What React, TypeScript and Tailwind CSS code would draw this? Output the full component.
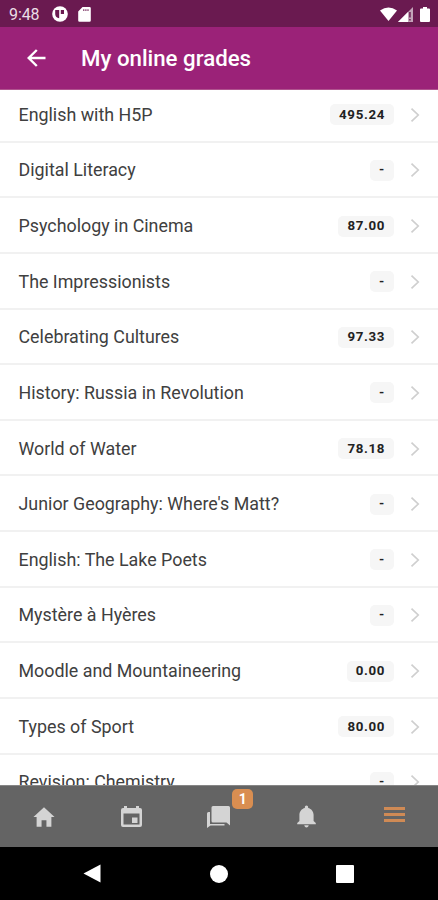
import { ReactNode } from 'react';
import { IoMdHome, IoMdNotifications } from 'react-icons/io';

interface Course {
  name: string;
  grade: string;
}

const courses: Course[] = [
  { name: 'English with H5P', grade: '495.24' },
  { name: 'Digital Literacy', grade: '-' },
  { name: 'Psychology in Cinema', grade: '87.00' },
  { name: 'The Impressionists', grade: '-' },
  { name: 'Celebrating Cultures', grade: '97.33' },
  { name: 'History: Russia in Revolution', grade: '-' },
  { name: 'World of Water', grade: '78.18' },
  { name: "Junior Geography: Where's Matt?", grade: '-' },
  { name: 'English: The Lake Poets', grade: '-' },
  { name: 'Mystère à Hyères', grade: '-' },
  { name: 'Moodle and Mountaineering', grade: '0.00' },
  { name: 'Types of Sport', grade: '80.00' },
  { name: 'Revision: Chemistry', grade: '-' },
];

function StatusBar() {
  return (
    <div className="h-[27px] shrink-0 bg-[#6a1a50] flex items-center pl-[9px] pr-2 pt-px text-white">
      <span className="w-[43px] text-[16px] leading-none pt-px tracking-[-0.1px] text-[#eadfe6]">9:48</span>
      <svg className="w-4 h-4" viewBox="0 0 16 16">
        <circle cx="8" cy="8" r="7.8" fill="#fff" />
        <path d="M3.2 4H7.2v8.200A4.600 4.600 0 0 1 3.200 8z" fill="#6a1a50" />
        <path d="M8.800 4h3.200v4H8.800z" fill="#6a1a50" />
      </svg>
      <svg className="w-[13px] h-[15px] ml-[10px]" viewBox="0 0 13 15">
        <path d="M4.500 0h7A1.300 1.300 0 0 1 12.800 1.300v12.200a1.300 1.300 0 0 1-1.300 1.300h-10A1.300 1.300 0 0 1 .2 13.500V4.500z" fill="#fff" />
        <path d="M5.300 2.200h1v1.800h-1zM7.400 2.200h1v1.800h-1zM9.500 2.200h1v1.800h-1z" fill="#6a1a50" />
      </svg>
      <svg className="w-[17px] h-[15px] ml-auto" viewBox="0 0 17 15">
        <path d="M0 3.500Q8.500-2.600 17 3.500L8.500 14z" fill="#fff" />
      </svg>
      <svg className="w-[15px] h-[15px] ml-px" viewBox="0 0 15 15">
        <path d="M15 0v15H0z" fill="#fff" fillOpacity=".6" />
        <path d="M10 5v10H0z" fill="#fff" />
        <path d="M11.200 5h1.500v5.500h-1.500zM11.200 12h1.500v1.600h-1.500z" fill="#6a1a50" />
      </svg>
      <svg className="w-[10px] h-[15px] ml-[7px]" viewBox="0 0 10 16" preserveAspectRatio="none">
        <path d="M3 0h4v1.600h2a1 1 0 0 1 1 1V15a1 1 0 0 1-1 1H1a1 1 0 0 1-1-1V2.600a1 1 0 0 1 1-1h2z" fill="#fff" />
      </svg>
    </div>
  );
}

function Header() {
  return (
    <header className="h-[63px] shrink-0 bg-[#9b2278] border-b border-[#b0538f] flex items-center pl-[27px] text-white">
      <svg className="w-[19px] h-[18px]" viewBox="0 0 19 18" fill="none" stroke="#fff" strokeWidth="2.400">
        <path d="M18.500 9H2M9.800 1L1.700 9l8.100 8" />
      </svg>
      <h1 className="ml-[35px] pt-px text-[22.250px] font-medium leading-none">My online grades</h1>
    </header>
  );
}

function CourseRow({ name, grade }: Course) {
  return (
    <li className="h-[55.640px] shrink-0 border-b-2 border-[#f1f1f1] flex items-center pt-[2px] pl-[18.500px] pr-[18px]">
      <span className="flex-1 text-[17.850px] leading-6 text-[#404040]">{name}</span>
      <span className="h-[21px] min-w-6 px-[9px] rounded-[5px] bg-[#f6f6f6] flex items-center justify-center text-[13.300px] font-bold tracking-[0.650px] text-[#222]">
        {grade}
      </span>
      <svg className="w-[10px] h-[14px] ml-4" viewBox="0 0 10 14" fill="none" stroke="#cfcfcf" strokeWidth="1.700">
        <path d="M1.500 .7L8.200 7l-6.700 6.300" />
      </svg>
    </li>
  );
}

function Tab({ children }: { children: ReactNode }) {
  return <button className="relative flex-1 flex justify-center items-center text-[#d4d4d4]">{children}</button>;
}

function TabBar() {
  return (
    <nav className="h-[62px] shrink-0 bg-[#646464] border-t border-[#868686] flex">
      <Tab>
        <IoMdHome size={26} />
      </Tab>
      <Tab>
        <svg className="w-[21px] h-[21px]" viewBox="0 0 21 21" fill="currentColor">
          <path fillRule="evenodd" d="M3 0h3v2h9V0h3v2h1a2 2 0 0 1 2 2v15a2 2 0 0 1-2 2H2a2 2 0 0 1-2-2V4a2 2 0 0 1 2-2h1zM2.500 7.500v11h16v-11z" />
          <path d="M11 11.500h5.500V17H11z" />
        </svg>
      </Tab>
      <Tab>
        <svg className="w-[23px] h-[22px]" viewBox="0 0 23 22" fill="currentColor">
          <path d="M6 0h15.500A1.500 1.500 0 0 1 23 1.500V19.500L19.500 16.500H6a1.500 1.500 0 0 1-1.500-1.500V1.500A1.500 1.500 0 0 1 6 0z" />
          <path d="M1.500 6H3v12h14.500v1.500H3.500L0 22V7.500A1.500 1.500 0 0 1 1.500 6z" />
        </svg>
        <span className="absolute left-[57px] top-[3px] w-[21px] h-5 rounded-[5px] bg-[#d98e51] text-white text-[14px] font-bold flex items-center justify-center">
          1
        </span>
      </Tab>
      <Tab>
        <IoMdNotifications size={27} />
      </Tab>
      <Tab>
        <svg className="w-[21px] h-[15px] mb-1" viewBox="0 0 21 15" fill="#cf8a55">
          <path d="M0 0h21v3H0zM0 6h21v3H0zM0 12h21v3H0z" />
        </svg>
      </Tab>
    </nav>
  );
}

function SystemNav() {
  return (
    <div className="h-[53px] shrink-0 bg-black flex items-center pl-[83px]">
      <svg className="w-[18px] h-[19px]" viewBox="0 0 18 19" fill="#fff">
        <path d="M17.500 .5v18L.5 9.500z" />
      </svg>
      <div className="w-[18px] h-[18px] rounded-full bg-white ml-[109px]" />
      <div className="w-[18px] h-[18px] rounded-[1px] bg-white ml-[108px]" />
    </div>
  );
}

export default function App() {
  return (
    <div className="w-[438px] h-[900px] flex flex-col overflow-hidden bg-white font-[Roboto,sans-serif]">
      <StatusBar />
      <Header />
      <ul className="flex-1 min-h-0 overflow-hidden">
        <div className="-mt-[3px]">
          {courses.map((course) => (
            <CourseRow key={course.name} {...course} />
          ))}
        </div>
      </ul>
      <TabBar />
      <SystemNav />
    </div>
  );
}
